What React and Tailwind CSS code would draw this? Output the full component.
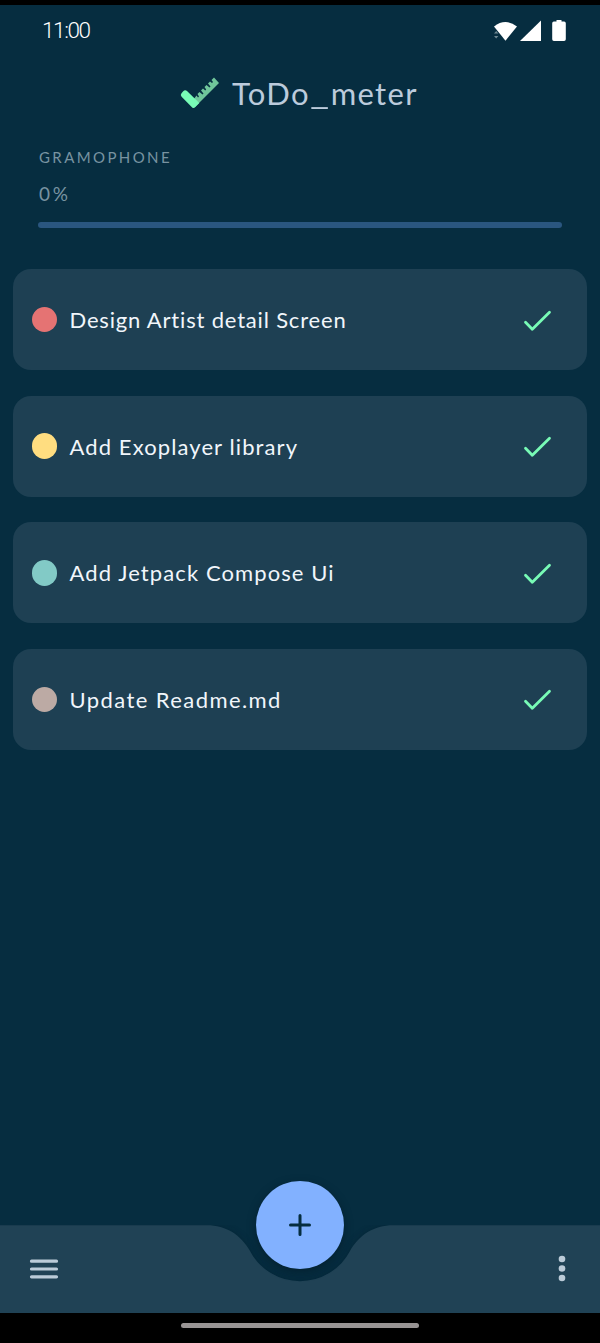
const tasks = [
  { title: "Design Artist detail Screen", dot: "bg-[#e57373]", tracking: "tracking-[0.82px]" },
  { title: "Add Exoplayer library", dot: "bg-[#ffdd80]", tracking: "tracking-[1.100px]" },
  { title: "Add Jetpack Compose Ui", dot: "bg-[#82cac6]", tracking: "tracking-[1.100px]" },
  { title: "Update Readme.md", dot: "bg-[#bcaaa4]", tracking: "tracking-[1.420px]" },
];

function StatusIcons() {
  return (
    <svg className="mt-px h-6 w-[76px]" viewBox="0 0 76 24" fill="#fff">
      <path d="M2 6.400Q13.500 -2.400 25 6.400L13.500 20.700Z" />
      <path d="M2 13.500l2.200-2.500 2.200 2.500zM2 16l2.200 2.500 2.200-2.500z" fill="#6e8791" />
      <path d="M49 .5v20.500H28z" />
      <path d="M64.500 0h5v1.500h2.600q1.700 0 1.700 1.700V19.300q0 1.700-1.700 1.700H61.900Q60.200 21 60.200 19.300V3.200q0-1.700 1.700-1.700H64.500z" />
    </svg>
  );
}

function LogoIcon() {
  return (
    <svg className="h-[34px] w-10" viewBox="0 0 40 34">
      <path
        d="M13.500 22.500L16.500 18.500l1.500 2 1-1-1.500-2.500 2-2 3 2.500 1-1-2.500-3 2-2 2.200 2 1-1-1.700-2.500 2-2 3 2.500 1-1-2.500-3 2-2 2 1.500 1-1-1.500-2L34 .5l5 5.500L14.500 30.500z"
        fill="#70c69b"
      />
      <path
        d="M3 14.500Q5 12.200 7 14L19.300 26L14.800 30.500Q13.500 31.500 12.200 30.400L1.600 19.800Q0 18 1.500 16.300z"
        fill="#78fbb6"
      />
    </svg>
  );
}

function TaskCard({ task }) {
  return (
    <li className="flex h-[101px] items-center rounded-[18px] bg-[#1e4053] pr-[34px] pl-[18.500px]">
      <span className={`mr-[12.500px] size-[25.500px] rounded-full ${task.dot}`} />
      <span className={`flex-1 whitespace-nowrap pt-px text-[22px] leading-7 text-[#f1f6fb] ${task.tracking}`}>{task.title}</span>
      <svg className="h-[26px] w-8" viewBox="0 0 32 26" fill="none" stroke="#78fbb6" strokeWidth="2.800" strokeLinecap="round" strokeLinejoin="round">
        <path d="M4.500 15.300L11.300 22.300L28.500 5.300" />
      </svg>
    </li>
  );
}

function BottomBar() {
  return (
    <footer className="relative h-[88px]">
      <svg className="absolute inset-0 h-[88px] w-[600px]" viewBox="0 0 600 88">
        <defs>
          <filter id="shade" x="-10%" y="-30%" width="120%" height="160%">
            <feGaussianBlur stdDeviation="3" />
          </filter>
        </defs>
        <path
          d="M0 0H207C226 0 242 9 250 25A56 56 0 0 0 350 25C358 9 374 0 393 0H600V88H0z"
          fill="#001c2a"
          opacity=".35"
          filter="url(#shade)"
        />
        <path d="M0 .3H207C226 .3 241 10 250 26A56.500 56.500 0 0 0 350 26C359 10 374 .3 393 .3H600V88H0z" fill="#204255" />
      </svg>
      <button className="absolute -top-11 left-64 flex size-[88px] items-center justify-center rounded-full bg-[#82b1ff] shadow-[0_3px_9px_rgba(0,20,32,0.5)]">
        <svg className="size-6" viewBox="0 0 24 24" stroke="#052d3f" strokeWidth="3" strokeLinecap="round">
          <path d="M12 2.500V21.500M2.500 12H21.500" />
        </svg>
      </button>
      <div className="relative flex h-[88px] items-center justify-between pr-[34px] pl-[29px]">
        <svg className="h-6 w-[30px]" viewBox="0 0 30 24" stroke="#bbcbd8" strokeWidth="3.200" strokeLinecap="round">
          <path d="M2.500 4.200H27.500M2.500 12H27.500M2.500 19.800H27.500" />
        </svg>
        <svg className="h-7 w-2" viewBox="0 0 8 28" fill="#bbcbd8">
          <circle cx="4" cy="4" r="3.300" />
          <circle cx="4" cy="13.500" r="3.300" />
          <circle cx="4" cy="23" r="3.300" />
        </svg>
      </div>
    </footer>
  );
}

export default function App() {
  return (
    <div className="flex h-[1343px] w-[600px] flex-col overflow-hidden border-t-[5px] border-black bg-[#062d40] font-['Lato',sans-serif]">
      <header className="flex h-[52px] items-center justify-between pr-[32px] pl-[42px]">
        <span className="font-['Roboto',sans-serif] text-[22.500px] font-light tracking-[-1.400px] text-white">11:00</span>
        <StatusIcons />
      </header>
      <div className="flex h-[74px] items-center pl-[180px] text-[#bccbdc]">
        <LogoIcon />
        <h1 className="ml-3 pb-[3px] text-[31px] leading-9 tracking-[1.300px]">
          ToDo<span className="inline-block w-[21px] origin-left scale-x-[1.350]">_</span>meter
        </h1>
      </div>
      <section className="px-[38px] pt-4 text-[#7893a1]">
        <h2 className="h-5 pl-px text-[15px] leading-5 tracking-[2.400px]">GRAMOPHONE</h2>
        <p className="mt-[15px] h-6 pl-px text-[19px] leading-6 tracking-[2.800px]">0%</p>
        <div className="mt-4 h-1.5 rounded-full bg-[#2a567f]" />
      </section>
      <ul className="mt-[41px] flex flex-1 flex-col gap-[25.670px] px-[13px]">
        {tasks.map((task) => (
          <TaskCard key={task.title} task={task} />
        ))}
      </ul>
      <BottomBar />
      <div className="flex h-[30px] justify-center bg-black pt-2.5">
        <div className="h-[5px] w-[238px] rounded-full bg-[#989494]" />
      </div>
    </div>
  );
}
